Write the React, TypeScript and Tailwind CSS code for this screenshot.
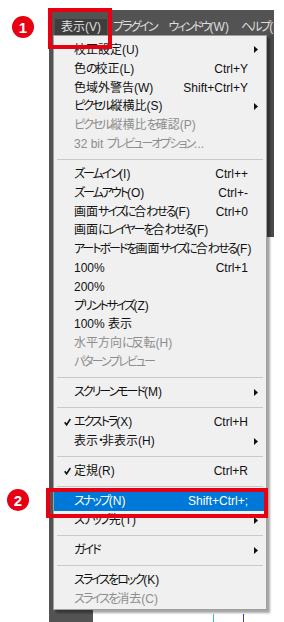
import React from 'react';

type Item =
  | 'sep'
  | { label: string; key?: string; sub?: boolean; disabled?: boolean; checked?: boolean; active?: boolean };

const ITEMS: Item[] = [
  { label: '校正設定(U)', sub: true },
  { label: '色の校正(L)', key: 'Ctrl+Y' },
  { label: '色域外警告(W)', key: 'Shift+Ctrl+Y' },
  { label: 'ピクセル縦横比(S)', sub: true },
  { label: 'ピクセル縦横比を確認(P)', disabled: true },
  { label: '32 bit プレビューオプション...', disabled: true },
  'sep',
  { label: 'ズームイン(I)', key: 'Ctrl++' },
  { label: 'ズームアウト(O)', key: 'Ctrl+-' },
  { label: '画面サイズに合わせる(F)', key: 'Ctrl+0' },
  { label: '画面にレイヤーを合わせる(F)' },
  { label: 'アートボードを画面サイズに合わせる(F)' },
  { label: '100%', key: 'Ctrl+1' },
  { label: '200%' },
  { label: 'プリントサイズ(Z)' },
  { label: '100% 表示' },
  { label: '水平方向に反転(H)', disabled: true },
  { label: 'パターンプレビュー', disabled: true },
  'sep',
  { label: 'スクリーンモード(M)', sub: true },
  'sep',
  { label: 'エクストラ(X)', key: 'Ctrl+H', checked: true },
  { label: '表示・非表示(H)', sub: true },
  'sep',
  { label: '定規(R)', key: 'Ctrl+R', checked: true },
  'sep',
  { label: 'スナップ(N)', key: 'Shift+Ctrl+;', active: true },
  { label: 'スナップ先(T)', sub: true },
  'sep',
  { label: 'ガイド', sub: true },
  'sep',
  { label: 'スライスをロック(K)' },
  { label: 'スライスを消去(C)', disabled: true },
];

// kana in the reference font are much narrower than in Noto CJK, so pull them together
const KANA = /([\u3041-\u30ff]+)/;
const jp = (s: string) =>
  s.split(KANA).map((part, i) =>
    KANA.test(part) ? (
      <span key={i} className="tracking-[-2px]">
        {part}
      </span>
    ) : (
      part
    )
  );

const Check = () => (
  <svg width="7" height="8" viewBox="0 0 7 8">
    <path d="M0.7 4.3 L2.6 6.8 L6.4 1" fill="none" stroke="#111" strokeWidth="1.6" />
  </svg>
);

const Arrow = () => (
  <svg width="4" height="7" viewBox="0 0 4 7">
    <path d="M0 0 L4 3.5 L0 7 Z" fill="#111" />
  </svg>
);

const Badge = ({ n }: { n: string }) => (
  <div className="w-[22px] h-[22px] rounded-full bg-[#e60012] text-white flex items-center justify-center font-['Liberation_Sans',sans-serif] font-bold text-[15px] leading-none">
    {n}
  </div>
);

export default function App() {
  return (
    <div className="relative w-[284px] h-[622px] bg-white overflow-hidden font-['Liberation_Sans','Noto_Sans_CJK_JP',sans-serif] [font-feature-settings:'palt'] text-[12px]">
      {/* app window behind the menu */}
      <div className="pt-[10px] pl-[49px]">
        <div className="w-[225px] flex flex-col">
          <div className="h-[25px] bg-[#535353] flex items-end pl-[6px] text-[#dedede] whitespace-nowrap overflow-hidden">
            <span className="shrink-0 h-[16px] px-[6px] flex items-center bg-[#3e3e3e]">{jp('表示(V)')}</span>
            <span className="shrink-0 h-[16px] px-[6px] flex items-center">{jp('プラグイン')}</span>
            <span className="shrink-0 h-[16px] px-[6px] flex items-center">{jp('ウィンドウ(W)')}</span>
            <span className="shrink-0 h-[16px] px-[6px] flex items-center">{jp('ヘルプ(H)')}</span>
          </div>
          <div className="flex h-[587px]">
            <div className="w-[44px] bg-[#535353]" />
            <div className="flex-1 flex flex-col">
              <div className="h-[202px] bg-[#4a4a4a]" />
              <div className="flex-1" />
              <div className="h-[8px] flex pl-[120px] gap-[29px]">
                <div className="w-px bg-[#3cc2a6]" />
                <div className="w-px bg-[#3a3ad0]" />
              </div>
            </div>
          </div>
        </div>
      </div>

      {/* dropdown menu */}
      <div className="absolute left-[53px] top-[35px] w-[214px] bg-[#f0f0f0] border border-[#a0a0a0] pt-[4.6px] pb-[1px] shadow-[3px_3px_2px_rgba(0,0,0,0.35)]">
        {ITEMS.map((it, i) =>
          it === 'sep' ? (
            <div key={i} className="h-[11.3px] flex items-center px-[3px]">
              <div className="h-px w-full bg-[#c9c9c9]" />
            </div>
          ) : (
            <div
              key={i}
              className={`h-[18.8px] flex items-center whitespace-nowrap ${
                it.active ? 'bg-[#0078d7] text-white' : it.disabled ? 'text-[#8d8d8d]' : 'text-[#111]'
              }`}
            >
              <div className="shrink-0 w-[20px] pl-[10px] flex items-center">{it.checked && <Check />}</div>
              <div className="flex-1 min-w-0">{jp(it.label)}</div>
              {it.key && <div className="shrink-0">{it.key}</div>}
              <div className="shrink-0 w-[18px] pl-[6px] flex items-center">{it.sub && <Arrow />}</div>
            </div>
          )
        )}
      </div>

      {/* annotations */}
      <div className="absolute left-[48px] top-[8px] w-[64px] h-[41px] border-[4px] border-[#e60012]" />
      <div className="absolute left-[46px] top-[488px] w-[222px] h-[30px] border-[4px] border-[#e60012]" />
      <div className="absolute left-[12px] top-[16px]">
        <Badge n="1" />
      </div>
      <div className="absolute left-[7px] top-[489px]">
        <Badge n="2" />
      </div>
    </div>
  );
}
